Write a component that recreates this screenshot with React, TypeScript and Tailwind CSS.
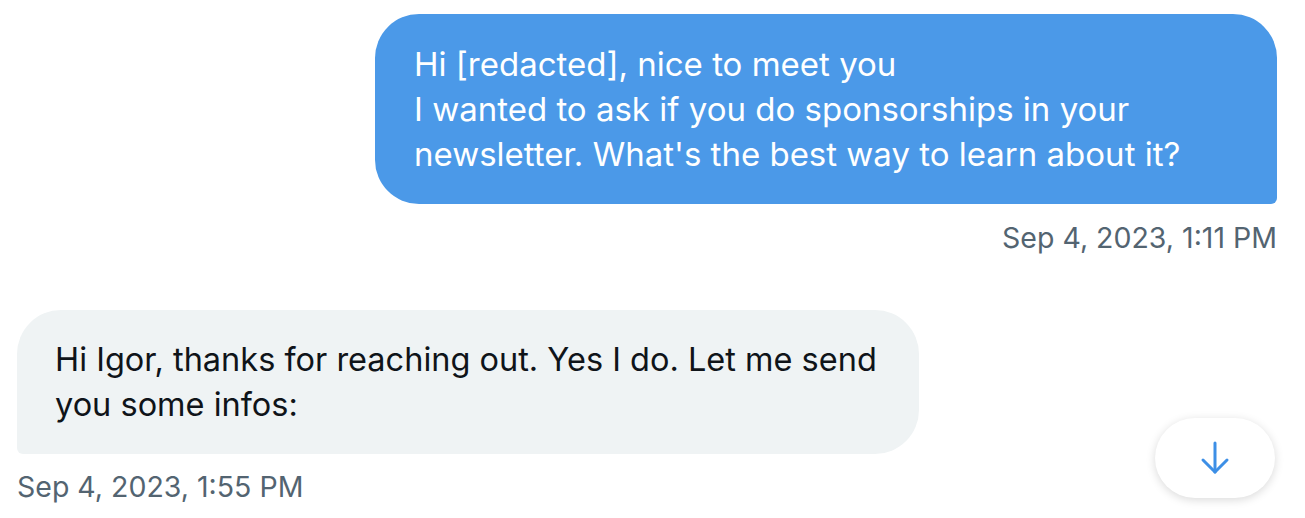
import React from "react";

const font = { fontFamily: "Inter, 'Noto Sans', sans-serif" };

export default function App() {
  return (
    <div
      className="relative w-[1305px] h-[518px] bg-white overflow-hidden pl-[17px] pr-[28px] pt-[14px]"
      style={font}
    >
      <div className="flex flex-col items-end">
        <div className="w-[902px] bg-[#4b99e8] text-white rounded-[44px] rounded-br-[6px] pl-[39px] pr-[20px] pt-[28px] pb-[27px] text-[33px] leading-[45px]">
          <div className="whitespace-nowrap">Hi [redacted], nice to meet you</div>
          <div className="whitespace-nowrap">I wanted to ask if you do sponsorships in your</div>
          <div className="whitespace-nowrap">newsletter. What's the best way to learn about it?</div>
        </div>
        <div className="mt-[18px] text-[28.5px] leading-[32px] text-[#536471]">Sep 4, 2023, 1:11 PM</div>
      </div>

      <div className="flex flex-col items-start mt-[56px]">
        <div className="w-[902px] bg-[#eff3f4] text-[#0f1419] rounded-[44px] rounded-bl-[6px] pl-[38px] pr-[20px] py-[27px] text-[32.5px] leading-[45px]">
          <div className="whitespace-nowrap">Hi Igor, thanks for reaching out. Yes I do. Let me send</div>
          <div className="whitespace-nowrap">you some infos:</div>
        </div>
        <div className="mt-[17px] text-[28.5px] leading-[32px] text-[#536471]">Sep 4, 2023, 1:55 PM</div>
      </div>

      <button className="absolute left-[1155px] top-[418px] w-[120px] h-[80px] rounded-full bg-white shadow-[0_2px_10px_rgba(0,0,0,0.15)] flex items-center justify-center">
        <svg width="30" height="34" viewBox="0 0 30 34" fill="none" stroke="#3d8fe6" strokeWidth="3" strokeLinecap="round" strokeLinejoin="round">
          <path d="M15 2 V31" />
          <path d="M3 19 L15 31 L27 19" />
        </svg>
      </button>
    </div>
  );
}
